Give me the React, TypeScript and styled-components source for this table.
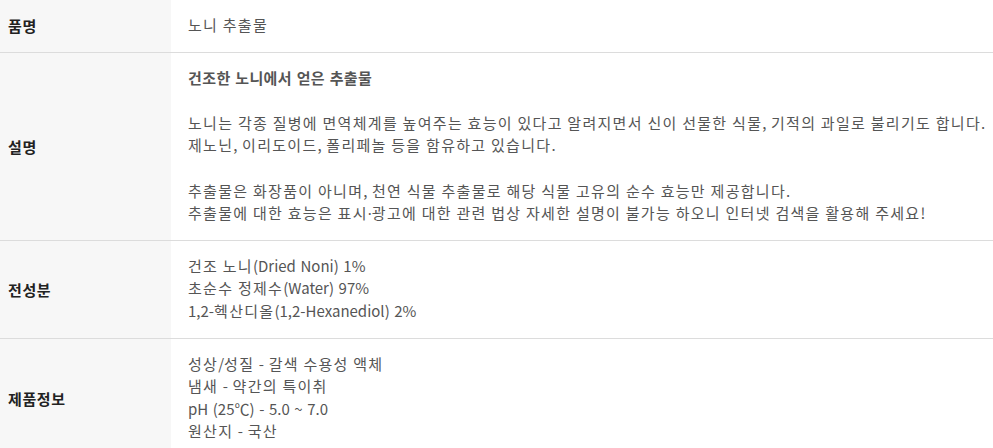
import React from 'react';
import styled, { createGlobalStyle } from 'styled-components';

type Spec = {
  label: string;
  lines: string[][];
  lead?: string;
};

const specs: Spec[] = [
  { label: '품명', lines: [['노니 추출물']] },
  {
    label: '설명',
    lead: '건조한 노니에서 얻은 추출물',
    lines: [
      [
        '노니는 각종 질병에 면역체계를 높여주는 효능이 있다고 알려지면서 신이 선물한 식물, 기적의 과일로 불리기도 합니다.',
        '제노닌, 이리도이드, 폴리페놀 등을 함유하고 있습니다.',
      ],
      [
        '추출물은 화장품이 아니며, 천연 식물 추출물로 해당 식물 고유의 순수 효능만 제공합니다.',
        '추출물에 대한 효능은 표시·광고에 대한 관련 법상 자세한 설명이 불가능 하오니 인터넷 검색을 활용해 주세요!',
      ],
    ],
  },
  {
    label: '전성분',
    lines: [['건조 노니(Dried Noni) 1%', '초순수 정제수(Water) 97%', '1,2-헥산디올(1,2-Hexanediol) 2%']],
  },
  {
    label: '제품정보',
    lines: [['성상/성질 - 갈색 수용성 액체', '냄새 - 약간의 특이취', 'pH (25℃) - 5.0 ~ 7.0', '원산지 - 국산']],
  },
];

const GlobalStyle = createGlobalStyle`
  html, body {
    margin: 0;
    padding: 0;
    background: #fff;
  }
  body {
    font-family: "Noto Sans CJK KR", "Noto Sans", sans-serif;
  }
`;

const Table = styled.div`
  width: 993px;
  display: grid;
  grid-template-columns: 171px 1fr;
`;

const Label = styled.div<{ $last?: boolean }>`
  display: flex;
  align-items: center;
  padding-left: 8px;
  background: #f7f7f7;
  border-bottom: ${(p) => (p.$last ? 'none' : '1px solid #dcdcdc')};
  font-size: 15px;
  font-weight: 700;
  color: #222;
  letter-spacing: 0.6px;
`;

const Content = styled.div<{ $last?: boolean }>`
  padding: 14px 0 15px 17px;
  border-bottom: ${(p) => (p.$last ? 'none' : '1px solid #dcdcdc')};
  font-size: 15px;
  line-height: 22.6px;
  color: #555;
  letter-spacing: 0;
  word-spacing: 1.2px;
`;

// hangul runs are set a little wider than latin ones
const Han = styled.span`
  letter-spacing: 1.3px;
`;

const Dot = styled.span`
  font-family: "Noto Sans", sans-serif;
`;

const Lead = styled.p`
  margin: 0 0 22.6px;
  font-weight: 700;

  ${Han} {
    letter-spacing: 0.4px;
  }
`;

const Para = styled.p`
  margin: 0 0 22.6px;
  &:last-child {
    margin-bottom: 0;
  }
`;

const Text = ({ value }: { value: string }) => (
  <>
    {value.split(/([\u3131-\uD7A3]+|·)/).map((part, i) => {
      if (part === '·') return <Dot key={i}>{part}</Dot>;
      if (/[\u3131-\uD7A3]/.test(part)) return <Han key={i}>{part}</Han>;
      return <React.Fragment key={i}>{part}</React.Fragment>;
    })}
  </>
);

export default function App() {
  return (
    <>
      <GlobalStyle />
      <Table>
        {specs.map((s, i) => {
          const last = i === specs.length - 1;
          return (
            <React.Fragment key={s.label}>
              <Label $last={last}>{s.label}</Label>
              <Content $last={last}>
                {s.lead && (
                  <Lead>
                    <Text value={s.lead} />
                  </Lead>
                )}
                {s.lines.map((para, j) => (
                  <Para key={j}>
                    {para.map((line, k) => (
                      <React.Fragment key={k}>
                        <Text value={line} />
                        {k < para.length - 1 && <br />}
                      </React.Fragment>
                    ))}
                  </Para>
                ))}
              </Content>
            </React.Fragment>
          );
        })}
      </Table>
    </>
  );
}
